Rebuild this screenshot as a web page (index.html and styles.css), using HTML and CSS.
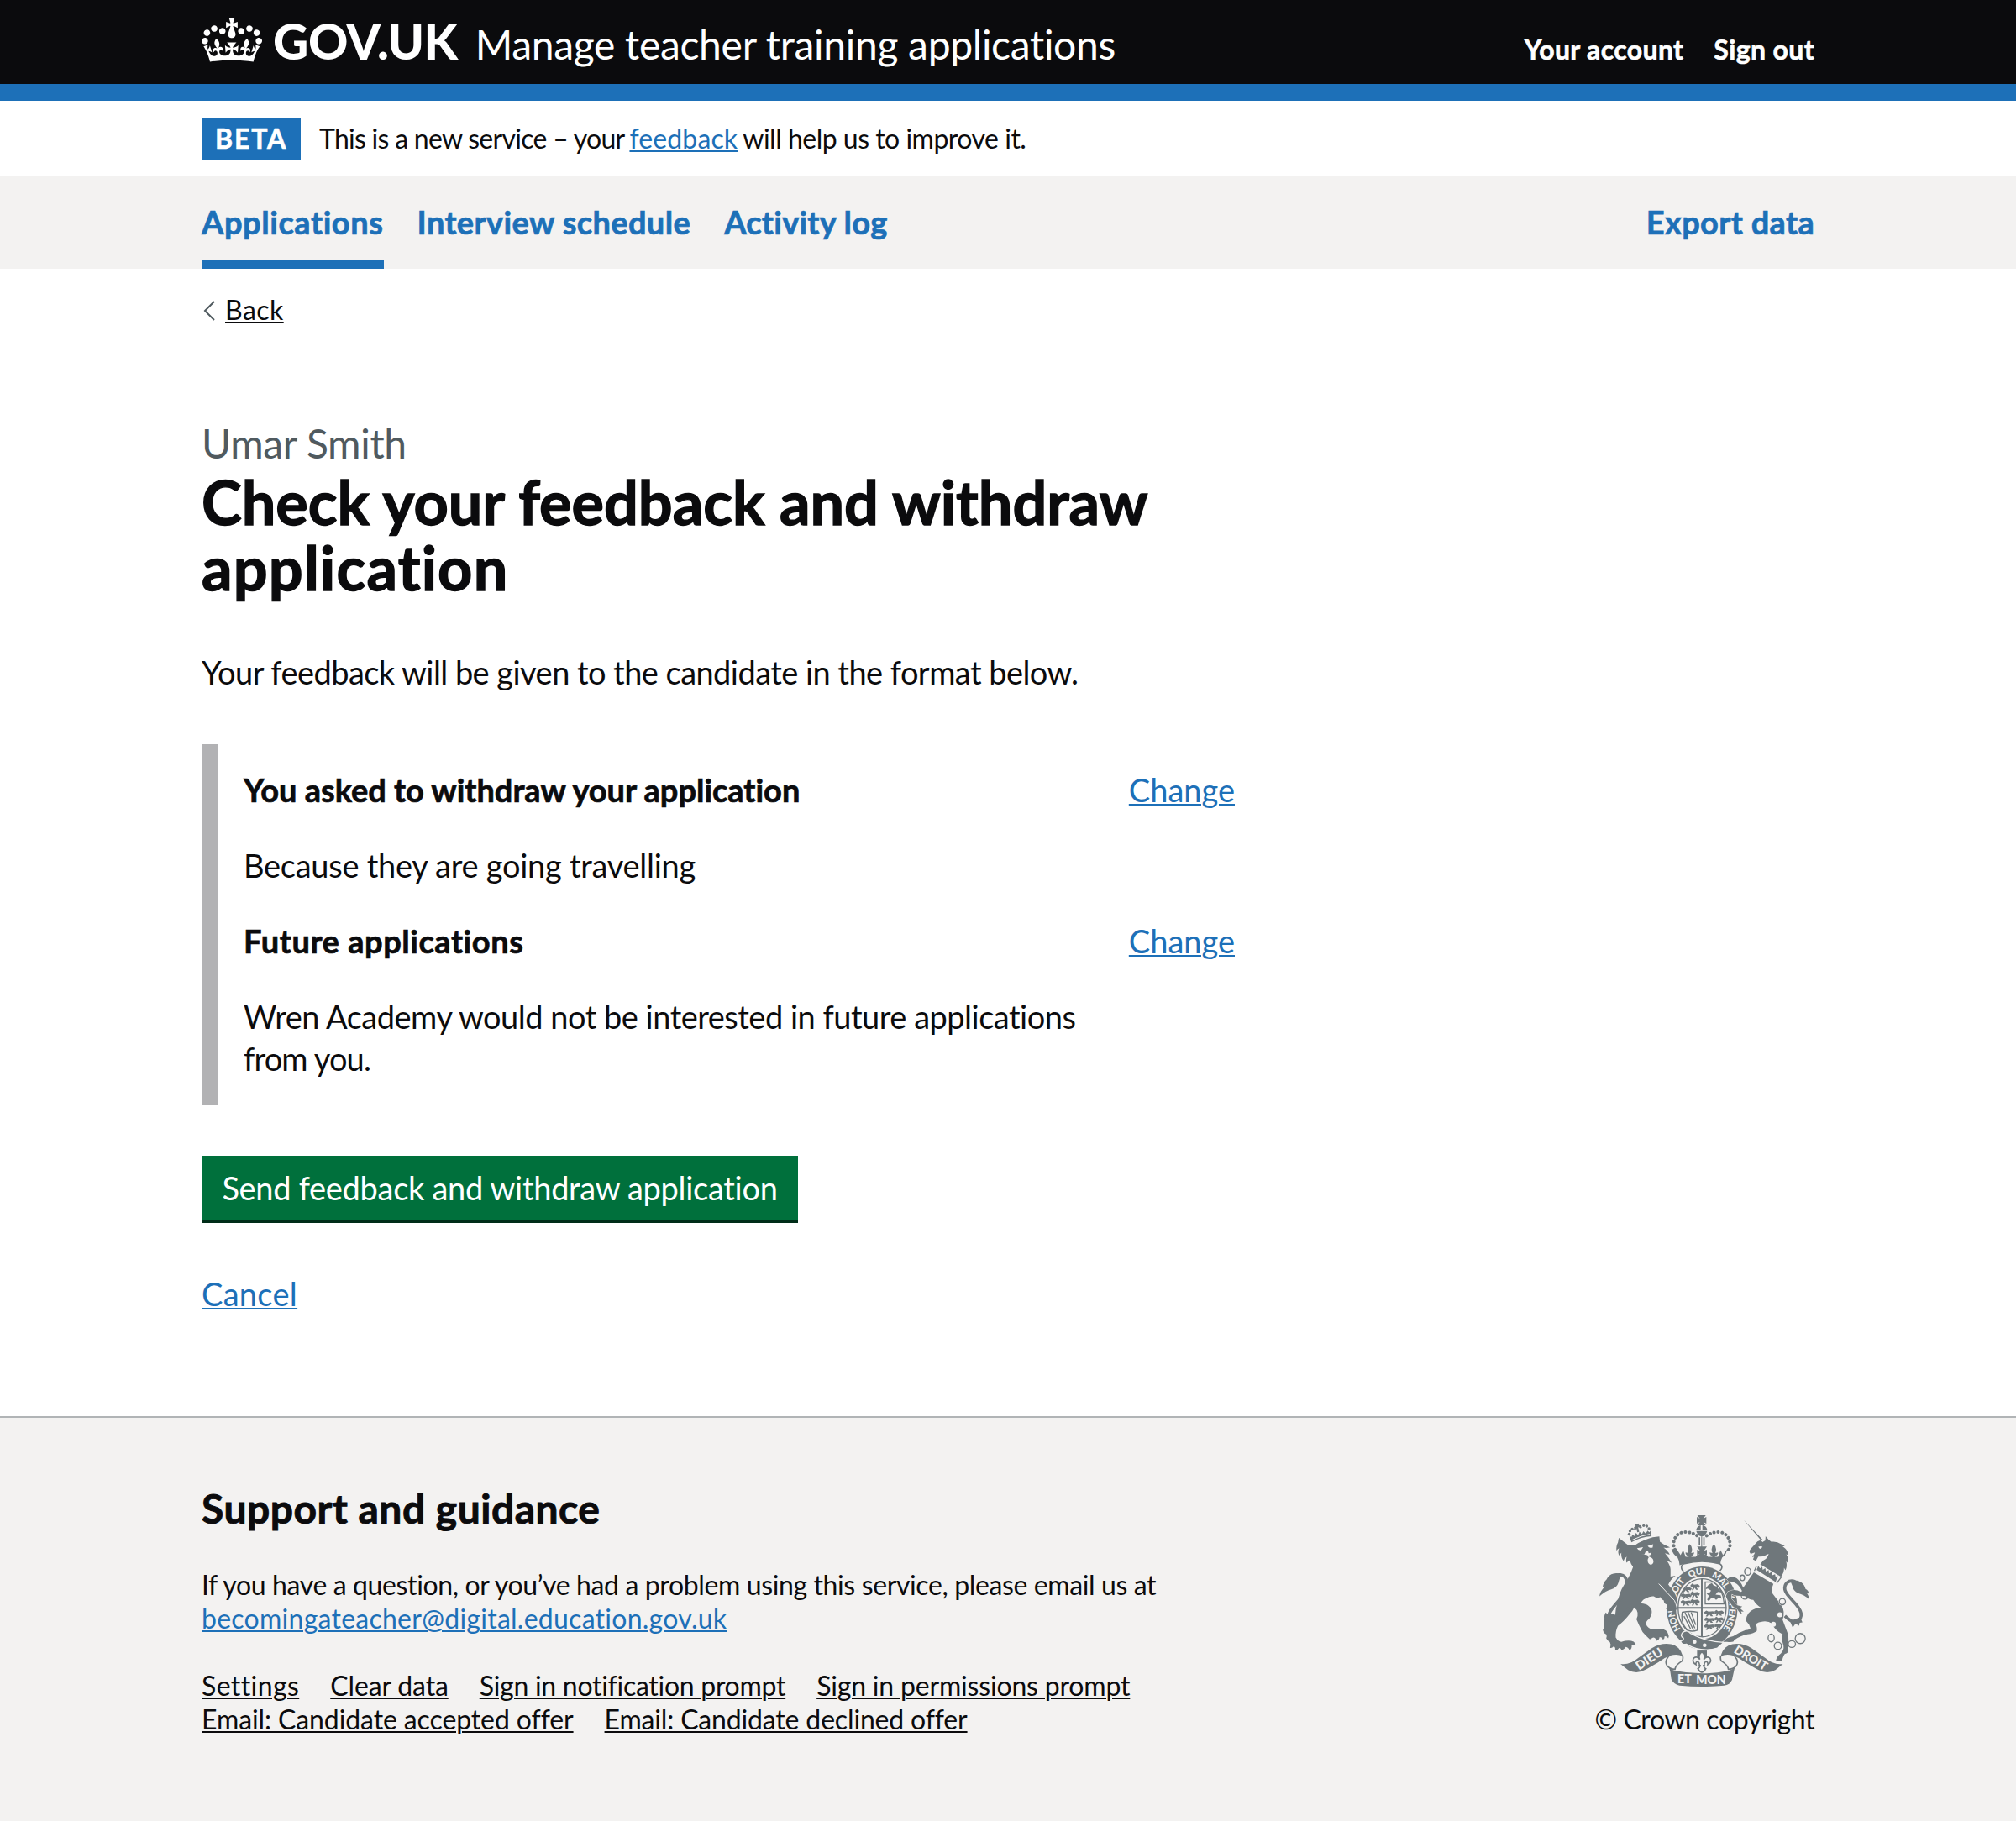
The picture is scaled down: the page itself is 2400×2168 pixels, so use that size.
FILE: index.html
```html
<!DOCTYPE html>
<html lang="en">
<head>
<meta charset="utf-8">
<title>Check your feedback and withdraw application</title>
<link rel="stylesheet" href="styles.css">
</head>
<body>
<header class="header">
  <div class="container header-row">
    <svg class="crown" viewBox="0 0 132 97" aria-hidden="true"><path fill="currentColor" fill-rule="evenodd" d="M25 30.2c3.5 1.5 7.7-.2 9.1-3.7 1.5-3.6-.2-7.8-3.9-9.2-3.6-1.4-7.6.3-9.1 3.9-1.4 3.5.3 7.5 3.9 9zM9 39.5c3.6 1.5 7.8-.2 9.2-3.7 1.5-3.6-.2-7.8-3.9-9.1-3.6-1.5-7.6.2-9.1 3.8-1.4 3.5.3 7.5 3.8 9zM4.4 57.2c3.5 1.5 7.7-.2 9.1-3.8 1.5-3.6-.2-7.7-3.9-9.1-3.5-1.5-7.6.3-9.1 3.8-1.4 3.5.3 7.6 3.9 9.1zm38.3-21.4c3.5 1.5 7.7-.2 9.1-3.8 1.5-3.6-.2-7.7-3.9-9.1-3.6-1.5-7.6.3-9.1 3.8-1.3 3.6.4 7.7 3.9 9.1zm64.4-5.6c-3.6 1.5-7.8-.2-9.1-3.7-1.5-3.6.2-7.8 3.8-9.2 3.6-1.4 7.7.3 9.2 3.9 1.3 3.5-.4 7.5-3.9 9zm15.9 9.3c-3.6 1.5-7.7-.2-9.1-3.7-1.5-3.6.2-7.8 3.7-9.1 3.6-1.5 7.7.2 9.2 3.8 1.5 3.5-.3 7.5-3.8 9zm4.7 17.7c-3.6 1.5-7.8-.2-9.2-3.8-1.5-3.6.2-7.7 3.9-9.1 3.6-1.5 7.7.3 9.2 3.8 1.3 3.5-.4 7.6-3.9 9.1zM89.3 35.8c-3.6 1.5-7.8-.2-9.2-3.8-1.4-3.6.2-7.7 3.9-9.1 3.6-1.5 7.7.3 9.2 3.8 1.4 3.6-.3 7.7-3.9 9.1zM69.7 17.7l8.9 4.7V9.3l-8.9 2.8c-.2-.3-.5-.6-.9-.9L72.4 0H59.6l3.5 11.2c-.3.3-.6.5-.9.9l-8.8-2.8v13.1l8.8-4.7c.3.3.6.7.9.9l-5 15.4v.1c-.2.8-.4 1.6-.4 2.4 0 4.1 3.1 7.5 7 8.1h.2c.3 0 .7.1 1 .1.4 0 .7 0 1-.1h.2c4-.6 7.1-4.1 7.1-8.1 0-.8-.1-1.7-.4-2.4V34l-5.1-15.4c.4-.2.7-.6 1-.9zM66 92.8c16.9 0 32.8 1.1 47.1 3.2 4-16.9 8.9-26.7 14-33.5l-9.6-3.4c1 4.9 1.1 7.2 0 10.2-1.5-1.4-3-4.3-4.2-8.7L108.6 76c2.8-2 5-3.2 7.5-3.3-4.4 9.4-10 11.9-13.6 11.2-4.3-.8-6.3-4.6-5.6-7.9 1-4.7 5.7-5.9 8-.5 4.3-8.7-3-11.4-7.6-8.8 7.1-7.2 7.9-13.5 2.1-21.1-8 6.1-8.1 12.3-4.5 20.8-4.7-5.4-12.1-2.5-9.5 6.2 3.4-5.2 7.9-2 7.2 3.1-.6 4.3-6.4 7.8-13.5 7.2-10.3-.9-10.9-8-11.2-13.8 2.5-.5 7.1 1.8 11 7.3L80.2 60c-4.1 4.4-8 5.3-12.3 5.4 1.4-4.4 8-11.6 8-11.6H55.5s6.4 7.2 7.9 11.6c-4.2-.1-8-1-12.3-5.4l1.4 16.4c3.9-5.5 8.5-7.7 10.9-7.3-.3 5.8-.9 12.8-11.1 13.8-7.2.6-12.9-2.9-13.5-7.2-.7-5 3.8-8.3 7.1-3.1 2.7-8.7-4.6-11.6-9.4-6.2 3.7-8.5 3.6-14.7-4.6-20.8-5.8 7.6-5 13.9 2.2 21.1-4.7-2.6-11.9.1-7.7 8.8 2.3-5.5 7.1-4.2 8.1.5.7 3.3-1.3 7.1-5.7 7.9-3.5.7-9-1.8-13.5-11.2 2.5.1 4.7 1.3 7.5 3.3l-4.7-15.4c-1.2 4.4-2.7 7.2-4.3 8.7-1.1-3-.9-5.3 0-10.2l-9.5 3.4c5 6.9 9.9 16.7 14 33.5 14.8-2.1 30.8-3.2 47.7-3.2z"/></svg>
    <a class="logo" href="#">GOV.UK</a>
    <a class="service" href="#">Manage teacher training applications</a>
    <nav class="account">
      <a href="#">Your account</a>
      <a href="#">Sign out</a>
    </nav>
  </div>
</header>

<div class="container phase">
  <strong class="tag">BETA</strong>
  <p class="phase-text"><span class="phase-lead">This is a new service – your</span><a class="link phase-link" href="#">feedback</a><span class="phase-end">will help us to improve it.</span></p>
</div>

<div class="subnav">
  <nav class="container subnav-row">
    <a class="subnav-link current" href="#">Applications</a>
    <a class="subnav-link interview" href="#">Interview schedule</a>
    <a class="subnav-link activity" href="#">Activity log</a>
    <a class="subnav-link export" href="#">Export data</a>
  </nav>
</div>

<main class="container main">
  <div class="back">
    <svg class="chevron" viewBox="0 0 14 24" aria-hidden="true"><path d="M13 1 2 12l11 11" fill="none" stroke="#505a5f" stroke-width="2"/></svg>
    <a class="link-dark" href="#">Back</a>
  </div>
  <p class="caption">Umar Smith</p>
  <h1 class="title"><span>Check your feedback and withdraw</span><br><span class="title-end">application</span></h1>
  <p class="intro">Your feedback will be given to the candidate in the format below.</p>

  <section class="inset">
    <div class="inset-row">
      <h2 class="subhead asked">You asked to withdraw your application</h2>
      <a class="link" href="#">Change</a>
    </div>
    <p class="because">Because they are going travelling</p>
    <div class="inset-row">
      <h2 class="subhead future">Future applications</h2>
      <a class="link" href="#">Change</a>
    </div>
    <p class="reason">Wren Academy would not be interested in future applications<br><span class="reason-end">from you.</span></p>
  </section>

  <button class="button" type="button">Send feedback and withdraw application</button>
  <p class="cancel"><a class="link" href="#">Cancel</a></p>
</main>

<footer class="footer">
  <div class="container footer-row">
    <div class="support">
      <h2 class="footer-title">Support and guidance</h2>
      <p class="footer-text">If you have a question, or you’ve had a problem using this service, please email us at<br><a class="link mail" href="#">becomingateacher@digital.education.gov.uk</a></p>
      <ul class="footer-links">
        <li><a class="link-dark l1" href="#">Settings</a></li>
        <li><a class="link-dark l2" href="#">Clear data</a></li>
        <li><a class="link-dark l3" href="#">Sign in notification prompt</a></li>
        <li><a class="link-dark l4" href="#">Sign in permissions prompt</a></li>
      </ul>
      <ul class="footer-links">
        <li><a class="link-dark l5" href="#">Email: Candidate accepted offer</a></li>
        <li><a class="link-dark l6" href="#">Email: Candidate declined offer</a></li>
      </ul>
    </div>
    <div class="copyright">
      <svg class="arms" viewBox="132 101 750 613" role="img" aria-label="Royal coat of arms">
        <defs>
          <path id="garter" d="M498 551A98 119 0 0 1 400 432A98 119 0 0 1 498 313A98 119 0 0 1 596 432A98 119 0 0 1 498 551"/>
          <clipPath id="shield"><ellipse cx="499" cy="432" rx="86" ry="104"/></clipPath>
          <g id="beast"><path d="M0 6l8-6 8 4 16-2 8 6-4 6-10-2 6 8h-8l-6-7-6 8H6l5-9-8 1z"/></g>
          <g id="lions"><use href="#beast"/><use href="#beast" y="24"/><use href="#beast" y="48"/></g>
        </defs>

        <!-- crown over the shield -->
        <g class="ink">
          <path d="M482 101h30l-9 12 11-6v24l-11-6 9 12h-30l9-12-11 6v-24l11 6zM478 152q4-14 16-15v15zM500 137q14 2 17 15h-17zM478 157h39q-5 18-19 20-15-2-20-20zM487 180h5v29h-5zM496 177h3v36h-3zM503 180h5v29h-5zM481 213h35l-10 15 10-4v20l-10-4 6 8h-28l6-8-9 4v-20l10 4z"/>
          <path d="M408 222l14 22 9-18 9 24 12 0q-14-8-12-16l10 2q-8-18 5-32 13 14 5 32l10-2q2 8-10 16l16 0 8-10 14 8 14-8 8 10h16q-12-8-10-16l10 2q-8-18 5-32 13 14 5 32l10-2q2 8-12 16h12l9-24 9 18 14-22q-1 20-17 30-8 14-7 28-80-22-146 0 1-14-7-28-16-10-22-30z"/>
        </g>
        <path class="beads" d="M402 224Q396 212 397 200Q402 166 434 161Q466 160 488 180M594 224Q600 212 599 200Q592 166 562 161Q530 160 508 180"/>
        <path d="M436 274Q498 258 560 274Q574 280 568 293L560 303Q498 270 436 303Q422 296 426 282Q430 276 436 274Z" fill="#f3f2f1" stroke="#6f777b" stroke-width="5"/>

        <!-- garter and quartered shield -->
        <ellipse cx="499" cy="432" rx="131" ry="152" class="paper"/>
        <ellipse cx="499" cy="432" rx="127" ry="148" class="ink"/>
        <ellipse cx="499" cy="432" rx="94" ry="112" class="paper"/>
        <ellipse cx="499" cy="432" rx="86" ry="104" class="line" stroke-width="4"/>
        <path class="line" stroke-width="6" d="M498 328v208M412 432h174"/>
        <g class="ink" clip-path="url(#shield)">
          <use href="#lions" x="422" y="356"/><use href="#lions" transform="translate(457 345) scale(.85 1.15)"/>
          <use href="#lions" x="506" y="442"/><use href="#lions" transform="translate(543 440) scale(.85 1)"/>
          <path d="M522 350l12-6 6 8 10 4 8-8-3 14 9 8 8-2-5 9-12-2-8 10 18 2 4 12-10-3-10 8-8-8-10 2-8 10-6-5 6-14-8-8 10-2 6-8-12-8-8 3 4-8z"/>
        </g>
        <path class="line" stroke-width="4" d="M510 340h30q34 24 38 78h-68zM428 448q30-6 54 0v64q-30 10-42-8-18-24-12-56zM438 450l30 62M449 449l24 56M460 449l16 44M434 462l24 46"/>
        <g class="garter-text">
          <text><textPath href="#garter" startOffset="90">HONI</textPath></text>
          <text><textPath href="#garter" startOffset="205">SOIT</textPath></text>
          <text><textPath href="#garter" startOffset="296">QUI</textPath></text>
          <text><textPath href="#garter" startOffset="376">MAL</textPath></text>
          <text><textPath href="#garter" startOffset="462">Y</textPath></text>
          <text><textPath href="#garter" startOffset="496">PENSE</textPath></text>
        </g>
        <path d="M428 522q16-14 30 2 50 28 118 32l-22 20q-58 18-112-14-18 4-20-12 12 0 10-10-12-6-4-18z" class="ink" stroke="#f3f2f1" stroke-width="4"/>
        <circle class="paper" cx="472" cy="554" r="7"/><circle class="paper" cx="508" cy="566" r="7"/>

        <!-- lion -->
        <g class="ink">
          <path d="M232 206l30 0q20-14 60-26l24-3 2 19q16 14 36 20-12 4-23 1 16 11 22 25-10-3-17-5 15 17 24 34-10-4-17-7 12 16 13 30v26l18-3q-18 13-26 32l18 24q12 17 16 46-2 20-18 41-4-10 0-18-9 4-12-2-8 2-12-4 4-8 2-16-10-2-10-14-9-2-12-12-14 6-24-3-14-2-30 8-13 6-16 18c16-2 34 10 38 22q4 16-8 32-10 6-12 14 0 16 18 23l36-1q22 4 26 20 4 8 0 14-6-8-13-7 0 10-6 12-4-9-12-9-2 11-10 13-5-12-13-12l-12 7q-16-14-26-26-14-26-22-46 12-26-8-42-6 14-16 23-22 28-42 42-10 20-8 42 8 14 20 16 26-8 44-1 8 6 7 14-6-5-14-2 2 12-8 20-4-12-13-13-6 10-15 12-2-8-9-8-5 9-14 8 2-10-5-14-8 8-13 5 4-12-1-20-9-5-13-14 4-5 0-14-10-4-12-16 6-5 4-14-4-10 2-26-3-12 4-22l8 7q5-8 15-1 6-5 11 3 1-24 8-42 6-38 24-66 22-34 32-64-8-9-12-24l-12 9q-2-12 1-22-8 6-11 16-10-12-8-30l-8 10q-6-12 0-26-6 3-9 9-3-14 5-30l3-16z"/>
          <path d="M246 198l-8-25 8 6 4-9 8 6 4-12 8 8 5-12 9 8 5-10 8 8 7-10 6 6 6-8 2 22q-40 2-72 22z"/>
          <circle cx="238" cy="168" r="5"/><circle cx="241" cy="157" r="5"/><circle cx="249" cy="150" r="5"/><circle cx="259" cy="151" r="4"/><circle cx="279" cy="144" r="4"/><circle cx="290" cy="138" r="5"/><circle cx="301" cy="140" r="5"/><circle cx="309" cy="149" r="5"/>
          <path d="M260 131l7 3 4-4 2 6 7 1-4 8-6-1 4 16-7 2-3-14-6 4-3-8 6-4z"/>
        </g>
        <g class="paper">
          <path d="M266 219l22-4-8 12q-10 1-14-8zM304 211l20-6-2 12q-12 4-18-6zM282 240l10 2 5-11 8-3 3 9 10-2-2 7-8 3 2 5q12 2 15 14 1 11-9 14-10-1-12-14 0-8 4-12l-5-8z"/>
        </g>
        <path fill="none" stroke="#f3f2f1" stroke-width="3" d="M250 189q32-16 62-20M344 346l56 60q6 12 9 26"/>
        <path class="line" stroke-width="11" d="M238 434c-24 24-54 42-76 32M166 464c-5-14 20-40 38-61 26-32 32-66 18-82-7-8-22-9-33-4"/>
        <path class="ink" d="M213 314q-16-8-31-4-16 3-25 21-11 10-14 27l9-2q-19 18-20 35 20-19 42-25 20-5 25-22l5-18zM146 462q8-2 18-6l16 8 22-2-12 20-13-6-4 9-9-6-4 7z"/>

        <!-- unicorn -->
        <g class="ink">
          <path d="M647 117l68 80 10-6 1-15 12 14 8 6q20-3 35 8l14 7-8 2q19 10 20 31l-7-3q10 14 7 33l-7-8q4 18-3 32l-5-9q1 18-11 32l-74-44 10-14q17-8 20-24-18 11-37 10l-9 16-10-6 4-10-7 2 9-14-12 4q-12-10-2-20l24-26q10-6 18-7z"/>
          <path d="M684 305l70 42q-8 18-3 34l32 42q14 22 4 52l18 48q6 24 0 52 6 16-6 21-8-2-14 26h-22q2-16 18-27 12-12 9-28-8-22-3-40-27-12-38-38-12-10-32-8-18 2-25 9 4 14 3 24-10 10-34 13-24 4-48 21 1 9-25 6h-14q12-16 36-20 24-15 44-22 16-2 18-7-3-14-16-26 0-30 26-41 16-8 28-6-16-8-28-28-16-1-30-14l-28-1q-10 0-19-6l-2 16 22 24 18 5-9 5 14 13-10-1 4 10q-10-4-18-18-17-9-24-22-12-10-16-24l6-16q24-13 48 0l4-3q-12-22-24-28-12-8-25-6l-6-8q12-11 27-8 20 8 32 38z" stroke="#f3f2f1" stroke-width="3" paint-order="stroke"/>
        </g>
        <g class="paper">
          <path d="M700 214q8-4 15 0l-6 8q-7-1-9-8zM664 242l24-8-4 8-16 6z"/>
          <circle cx="777" cy="457" r="9"/><circle cx="754" cy="491" r="9"/><circle cx="786" cy="410" r="14"/>
        </g>
        <path class="ink" d="M694 296l6-14 6 9 8-6 2 11 9-6 2 12 10-5 1 12 10-5 2 12 10-4 2 10 8-6-8 24z"/>
        <path class="line" stroke-width="4" d="M686 300l7-16M766 344l18-24"/>
        <g class="line" stroke-width="4">
          <ellipse cx="662" cy="302" rx="11" ry="13"/><ellipse cx="643" cy="325" rx="8" ry="10"/><ellipse cx="652" cy="387" rx="13" ry="14"/><circle cx="786" cy="410" r="11"/><ellipse cx="746" cy="540" rx="11" ry="14"/><circle cx="770" cy="568" r="13"/><ellipse cx="820" cy="562" rx="13" ry="12"/><circle cx="850" cy="542" r="18"/>
        </g>
        <path class="line" stroke-width="11" d="M832 338c-24-8-40 8-37 29 4 26 52 52 58 84 2 14-4 28-17 32-14 2-26-8-41-22"/>
        <path class="ink" d="M815 337q20-8 38 4 12 8 16 24 11 5 11 16l-6-1q6 8 8 22-18-16-40-22-17-8-20-26zM850 466l8 18-10 2-2 10-13-7-10 14-10-24z"/>

        <!-- ribbon -->
        <path class="ink" d="M207 633Q240 638 270 612L318 577Q352 556 388 562Q420 568 430 605Q408 596 386 603Q362 611 340 628L300 652Q266 672 234 655Z"/>
        <path class="ink" d="M788 633Q755 638 725 612L677 577Q643 556 607 562Q575 568 565 605Q587 596 609 603Q633 611 655 628L695 652Q729 672 761 655Z"/>
        <path class="line" stroke-width="5" d="M383 602Q362 622 374 640Q386 652 402 652Q404 636 428 622Q432 612 429 604M612 602Q633 622 621 640Q609 652 593 652Q591 636 567 622Q563 612 566 604"/>
        <path class="ink" d="M378 636Q384 654 404 658Q498 676 592 658Q612 654 618 636Q612 662 606 690Q598 708 578 710Q498 718 418 710Q398 707 389 688Q387 660 378 636Z"/>
        <g class="motto">
          <text transform="translate(273 656) rotate(-33)" textLength="106" lengthAdjust="spacingAndGlyphs">DIEU</text>
          <text x="411" y="703" textLength="50" lengthAdjust="spacingAndGlyphs">ET</text>
          <text x="478" y="704" textLength="106" lengthAdjust="spacingAndGlyphs">MON</text>
          <text transform="translate(610 591) rotate(31)" textLength="130" lengthAdjust="spacingAndGlyphs">DROIT</text>
        </g>
        <path class="ink" d="M481 585h35v28h-35z"/>
        <path d="M498 589q14 13 7 28 10-14 22-5 8 14-8 23 2-9-6-11-8 4-6 14h-3q2 10 8 12-5 11-14 13-9-2-14-13 6-2 8-12h-3q2-10-6-14-8 2-6 11-16-9-8-23 12-9 22 5-7-15 7-28z" fill="#f3f2f1" stroke="#6f777b" stroke-width="5"/>
      </svg>
      <span class="copy-text">© Crown copyright</span>
    </div>
  </div>
</footer>
</body>
</html>
```
FILE: styles.css
```css
* { box-sizing: border-box; }

body {
  margin: 0;
  min-height: 2168px;
  display: flex;
  flex-direction: column;
  background: #fff;
  color: #0b0b0d;
  font-family: Lato, "Open Sans", sans-serif;
  font-size: 38px;
  line-height: 50px;
  font-variant-ligatures: none;
}

h1, h2, p, ul { margin: 0; padding: 0; }
li { list-style: none; }
a { color: inherit; text-decoration: none; }

.container { width: 1920px; margin: 0 auto; }

.link, .link-dark {
  text-decoration: underline;
  text-decoration-thickness: 2px;
  text-underline-offset: 2px;
}
.link { color: #1d70b8; }
.link-dark { color: #0b0b0d; }

/* Header */
.header {
  height: 120px;
  background: #0b0b0d;
  border-bottom: 20px solid #1d70b8;
  color: #fff;
  white-space: nowrap;
}
.header-row { display: flex; align-items: baseline; }
.crown {
  width: 72px;
  height: 53px;
  margin: 21px 13px 0 0;
  align-self: flex-start;
}
.logo { font-size: 58.5px; font-weight: 900; line-height: 97px; letter-spacing: -.5px; }
.service { font-size: 48px; line-height: 60px; letter-spacing: -.3px; margin-left: 21px; }
.account {
  display: flex;
  gap: 36px;
  margin-left: auto;
  font-size: 32px;
  font-weight: 700;
  line-height: 40px;
  letter-spacing: .37px;
  -webkit-text-stroke: .6px currentColor;
}

/* Phase banner */
.phase {
  height: 90px;
  padding-top: 20px;
  display: flex;
  align-items: baseline;
  gap: 22px;
  font-size: 32px;
  line-height: 40px;
}
.tag {
  width: 118px;
  height: 50px;
  padding: 0 14px 1px 16px;
  background: #1d70b8;
  color: #fff;
  line-height: 49px;
  letter-spacing: 1.9px;
  -webkit-text-stroke: .6px currentColor;
}
.phase-text { display: flex; }
.phase-lead { letter-spacing: -.72px; margin-right: 6px; }
.phase-link { letter-spacing: .13px; }
.phase-end { letter-spacing: -.5px; margin-left: 6px; }

/* Primary navigation */
.subnav { height: 110px; background: #f3f2f1; }
.subnav-row { display: flex; gap: 40px; }
.subnav-link {
  height: 110px;
  color: #1d70b8;
  font-weight: 700;
  line-height: 109px;
  -webkit-text-stroke: .7px currentColor;
}
.current { box-shadow: inset 0 -10px #1d70b8; letter-spacing: .57px; }
.interview { letter-spacing: .38px; }
.activity { letter-spacing: .25px; }
.export { letter-spacing: .32px; margin-left: auto; }

/* Page content */
.back {
  display: flex;
  align-items: center;
  margin-top: 29px;
  font-size: 32px;
  line-height: 40px;
  letter-spacing: .45px;
}
.chevron { width: 14px; height: 24px; margin: 2px 12px 0 2px; }
.caption {
  margin-top: 109px;
  color: #505a5f;
  font-size: 48px;
  line-height: 60px;
  letter-spacing: -.35px;
}
.title {
  font-size: 72px;
  font-weight: 700;
  line-height: 78px;
  letter-spacing: 0;
  -webkit-text-stroke: 1.4px currentColor;
}
.title-end { letter-spacing: 1.2px; }
.intro { margin-top: 61px; letter-spacing: -.55px; }

.inset {
  width: 1230px;
  margin-top: 61px;
  padding: 29px 0 31px 30px;
  border-left: 20px solid #b2b2b4;
  display: flex;
  flex-direction: column;
  gap: 40px;
}
.inset-row { display: flex; justify-content: space-between; }
.subhead { font-size: 38px; font-weight: 700; -webkit-text-stroke: .7px currentColor; }
.asked { letter-spacing: -.02px; }
.future { letter-spacing: .55px; }
.because { letter-spacing: -.27px; }
.reason { letter-spacing: -.5px; }
.reason-end { letter-spacing: -.85px; }

.button {
  display: block;
  width: 710px;
  height: 80px;
  margin-top: 60px;
  padding: 0;
  border: 0;
  border-bottom: 4px solid #002d18;
  background: #00703c;
  color: #fff;
  font: inherit;
  line-height: 76px;
  letter-spacing: -.3px;
}
.cancel { margin-top: 59px; letter-spacing: .3px; }

/* Footer */
.footer {
  flex: 1;
  margin-top: 121px;
  padding-top: 78px;
  border-top: 2px solid #b1b4b6;
  background: #f3f2f1;
  font-size: 32px;
  line-height: 40px;
}
.footer-row { display: flex; justify-content: space-between; align-items: flex-end; }
.footer-title {
  font-size: 48px;
  line-height: 60px;
  letter-spacing: .5px;
  -webkit-text-stroke: .9px currentColor;
}
.footer-text { margin: 41px 0 40px; letter-spacing: -.38px; }
.mail { letter-spacing: .26px; }
.footer-links { display: flex; gap: 37px; }
.l1 { letter-spacing: .4px; }
.l2 { letter-spacing: -.14px; }
.l3 { letter-spacing: -.28px; }
.l4 { letter-spacing: -.18px; }
.l5 { letter-spacing: -.1px; }
.l6 { letter-spacing: -.16px; }

.copyright { display: flex; flex-direction: column; align-items: center; gap: 19px; }
.copy-text { letter-spacing: -.4px; }
.arms { width: 250px; height: 204px; }
.ink { fill: #6f777b; }
.paper { fill: #f3f2f1; }
.line { fill: none; stroke: #6f777b; }
.beads {
  fill: none;
  stroke: #6f777b;
  stroke-width: 12px;
  stroke-linecap: round;
  stroke-dasharray: .1 14.5;
}
.garter-text { fill: #f3f2f1; font-size: 32px; font-weight: 900; letter-spacing: -.8px; }
.motto { fill: #f3f2f1; font-size: 43px; font-weight: 900; }
```
